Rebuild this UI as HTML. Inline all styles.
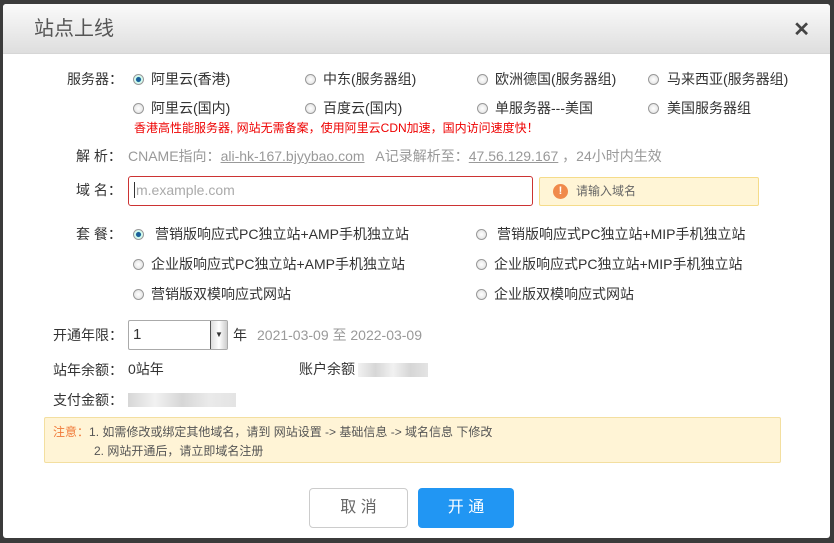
<!DOCTYPE html><html><head><meta charset="utf-8"><style>
*{margin:0;padding:0;box-sizing:border-box}
body{width:834px;height:543px;background:#3b3b3b;position:relative;overflow:hidden;font-family:"Liberation Sans","Noto Sans CJK SC",sans-serif;font-size:14px;color:#333}
.dlg{position:absolute;left:3px;top:4px;width:827px;height:534px;background:#fff;border-radius:3px;overflow:hidden}
.hd{position:absolute;left:0;top:0;right:0;height:50px;background:linear-gradient(#fafafa,#dedede);border-bottom:1px solid #d6d6d6}
.hd .t{position:absolute;left:31px;top:12px;font-size:20px;color:#555;line-height:26px}
.hd .x{position:absolute;right:20px;top:13px;font-size:20px;font-weight:bold;color:#444}
.a{position:absolute;white-space:nowrap;line-height:16px}
.r{position:absolute;width:11px;height:11px;border-radius:50%;border:1px solid #999;background:radial-gradient(#fff,#ddd)}
.r.on{background:radial-gradient(#1a5f9a 35%,#cfe 45%,#eee)}
.g{color:#999}
u{color:#999}
</style></head><body>
<div class="dlg">
<div class="hd"><div class="t">站点上线</div><div class="x">✕</div></div>
</div>
<div class="a" style="left:67px;top:71px">服务器：</div>
<div class="r on" style="left:133px;top:74px"></div><div class="a" style="left:151px;top:71px">阿里云(香港)</div>
<div class="r" style="left:305px;top:74px"></div><div class="a" style="left:323px;top:71px">中东(服务器组)</div>
<div class="r" style="left:477px;top:74px"></div><div class="a" style="left:495px;top:71px">欧洲德国(服务器组)</div>
<div class="r" style="left:648px;top:74px"></div><div class="a" style="left:667px;top:71px">马来西亚(服务器组)</div>
<div class="r" style="left:133px;top:103px"></div><div class="a" style="left:151px;top:100px">阿里云(国内)</div>
<div class="r" style="left:305px;top:103px"></div><div class="a" style="left:323px;top:100px">百度云(国内)</div>
<div class="r" style="left:477px;top:103px"></div><div class="a" style="left:495px;top:100px">单服务器---美国</div>
<div class="r" style="left:648px;top:103px"></div><div class="a" style="left:667px;top:100px">美国服务器组</div>
<div class="a" style="left:134px;top:120px;color:#e00;font-size:12px">香港高性能服务器, 网站无需备案，使用阿里云CDN加速，国内访问速度快！</div>
<div class="a" style="left:76px;top:148px">解 析：</div>
<div class="a g" style="left:128px;top:148px;font-size:14px">CNAME指向：<u>ali-hk-167.bjyybao.com</u> &nbsp; A记录解析至：<u>47.56.129.167</u> ，24小时内生效</div>
<div class="a" style="left:76px;top:182px">域 名：</div>
<div style="position:absolute;left:128px;top:176px;width:405px;height:30px;border:1px solid #c33;border-radius:3px"></div>
<div class="a" style="left:134px;top:182px;color:#aaa;font-size:14px;border-left:1px solid #333;padding-left:1px">m.example.com</div>
<div style="position:absolute;left:539px;top:177px;width:220px;height:29px;background:#fff5d6;border:1px solid #f5dc8a;border-radius:2px"></div>
<div style="position:absolute;left:553px;top:184px;width:15px;height:15px;border-radius:50%;background:#f08a4b;color:#fff;font-size:11px;font-weight:bold;text-align:center;line-height:15px">!</div>
<div class="a" style="left:576px;top:183px;color:#666;font-size:12px">请输入域名</div>
<div class="a" style="left:76px;top:226px">套 餐：</div>
<div class="r on" style="left:133px;top:229px"></div><div class="a" style="left:155px;top:226px">营销版响应式PC独立站+AMP手机独立站</div>
<div class="r" style="left:476px;top:229px"></div><div class="a" style="left:497px;top:226px">营销版响应式PC独立站+MIP手机独立站</div>
<div class="r" style="left:133px;top:259px"></div><div class="a" style="left:151px;top:256px">企业版响应式PC独立站+AMP手机独立站</div>
<div class="r" style="left:476px;top:259px"></div><div class="a" style="left:494px;top:256px">企业版响应式PC独立站+MIP手机独立站</div>
<div class="r" style="left:133px;top:289px"></div><div class="a" style="left:151px;top:286px">营销版双模响应式网站</div>
<div class="r" style="left:476px;top:289px"></div><div class="a" style="left:494px;top:286px">企业版双模响应式网站</div>
<div class="a" style="left:53px;top:327px">开通年限：</div>
<div style="position:absolute;left:128px;top:320px;width:100px;height:30px;border:1px solid #aaa;border-radius:2px"></div>
<div class="a" style="left:133px;top:327px;font-size:15px">1</div>
<div style="position:absolute;left:210px;top:321px;width:17px;height:28px;background:linear-gradient(90deg,#ddd,#fff,#ccc);border-left:1px solid #555;font-size:8px;text-align:center;line-height:28px">▼</div>
<div class="a" style="left:233px;top:327px">年</div>
<div class="a g" style="left:257px;top:327px;font-size:14px">2021-03-09 至 2022-03-09</div>
<div class="a" style="left:53px;top:362px">站年余额：</div>
<div class="a" style="left:128px;top:361px">0站年</div>
<div class="a" style="left:299px;top:361px">账户余额</div>
<div style="position:absolute;left:358px;top:363px;width:70px;height:14px;background:linear-gradient(90deg,#eee,#ccc,#eee,#ccc,#ddd);opacity:.8"></div>
<div class="a" style="left:53px;top:392px">支付金额：</div>
<div style="position:absolute;left:128px;top:393px;width:108px;height:14px;background:linear-gradient(90deg,#ccc,#eee,#ccc,#e5e5e5,#ddd);opacity:.8"></div>
<div style="position:absolute;left:44px;top:417px;width:737px;height:46px;background:#fff4d6;border:1px solid #f3dfa0;border-radius:2px"></div>
<div class="a" style="left:53px;top:424px;font-size:12px;color:#555"><span style="color:#f07a3a">注意：</span>1. 如需修改或绑定其他域名，请到 网站设置 -&gt; 基础信息 -&gt; 域名信息 下修改</div>
<div class="a" style="left:94px;top:443px;font-size:12px;color:#555">2. 网站开通后，请立即域名注册</div>
<div style="position:absolute;left:309px;top:488px;width:99px;height:40px;border:1px solid #ccc;border-radius:4px;text-align:center;line-height:38px;font-size:16px;color:#666">取 消</div>
<div style="position:absolute;left:418px;top:488px;width:96px;height:40px;background:#2196f3;border-radius:4px;text-align:center;line-height:40px;font-size:16px;color:#fff">开 通</div>
</body></html>
